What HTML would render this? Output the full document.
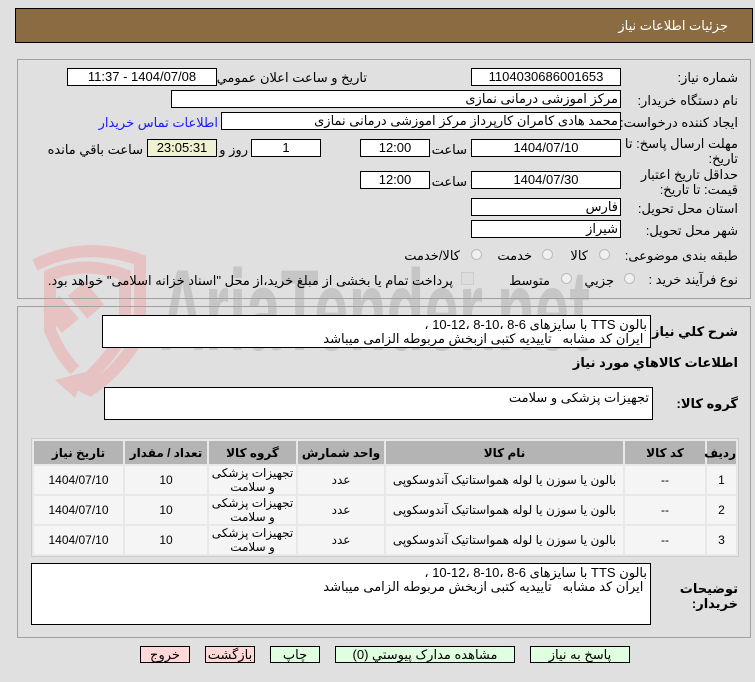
<!DOCTYPE html>
<html><head><meta charset="utf-8"><style>
body{margin:0;width:755px;height:682px;background:#e0e0e0;font-family:"Liberation Sans","DejaVu Sans",sans-serif;font-size:12px;color:#000;position:relative;overflow:hidden}
.a{position:absolute}
.hdr{left:15px;top:8px;width:736px;height:33px;background:#8b6c42;border:1px solid #000}
.hdr span{position:absolute;right:24px;top:9px;color:#fff;font-size:13px}
.pnl{border:1px solid #a0a0a0;left:17px;width:732px}
.box{position:absolute;background:#fff;border:1px solid #000;box-sizing:border-box;text-align:center;font-size:13px;line-height:15px;direction:rtl}
.l{position:absolute;direction:rtl;white-space:nowrap;font-size:13px}
.r{right:17px}
.rad{position:absolute;width:11px;height:11px;border-radius:50%;border:1px solid #bbb;background:#f0f0f0;box-sizing:border-box}
.ta{position:absolute;background:#fff;border:1px solid #000;box-sizing:border-box;direction:rtl;font-size:13px;line-height:15px;padding:2px 3px}
table{position:absolute;left:31px;top:438px;width:708px;table-layout:fixed;border-collapse:separate;border-spacing:2px;background:#e8e8e8;border:1px solid #ccc;direction:rtl}
th{background:#b4b4b4;height:23px;font-size:12px;font-weight:bold;padding:0}
td{background:#f5f5f5;height:28px;text-align:center;font-size:12px;line-height:14px;padding:0}
.btn{position:absolute;top:646px;height:17px;border:1px solid #000;box-sizing:border-box;text-align:center;font-size:13px;line-height:15px;background:#e0ffe0}
.red{background:#ffd8d8}
</style></head><body>
<svg class="a" style="left:0;top:230px" width="640" height="180">
<path d="M35 35 Q85 10 140 30 L140 105 Q120 140 90 160 L80 155 Q110 130 125 100 L125 45 Q85 30 50 45 L50 100 Q60 125 75 140" fill="none" stroke="#e6c2c2" stroke-width="12"/>
<path d="M55 150 L75 168 L85 142 Z" fill="#e6c2c2"/>
<rect x="50" y="70" width="22" height="30" fill="#e6c2c2" transform="rotate(-40 60 85)"/>
<rect x="75" y="55" width="22" height="30" fill="#e6c2c2" transform="rotate(-40 86 70)"/>
<text x="160" y="120" font-family="Liberation Sans" font-weight="bold" font-size="115" fill="#c6c6c6" textLength="430" lengthAdjust="spacingAndGlyphs">AriaTender.net</text>
</svg>
<div class="a hdr"><span>جزئیات اطلاعات نیاز</span></div>
<div class="a pnl" style="top:59px;height:238px"></div>
<div class="a pnl" style="top:306px;height:330px"></div>

<div class="l r" style="top:70px">شماره نیاز:</div>
<div class="box" style="left:471px;top:68px;width:150px;height:18px">1104030686001653</div>
<div class="l" style="right:388px;top:70px">تاريخ و ساعت اعلان عمومي:</div>
<div class="box" style="left:67px;top:68px;width:150px;height:18px">1404/07/08 - 11:37</div>

<div class="l r" style="top:93px">نام دستگاه خریدار:</div>
<div class="box" style="left:171px;top:90px;width:450px;height:18px;text-align:right;padding-right:2px">مرکز اموزشی درمانی نمازی</div>

<div class="l r" style="top:115px">ایجاد کننده درخواست:</div>
<div class="box" style="left:221px;top:112px;width:400px;height:18px;text-align:right;padding-right:2px">محمد هادی کامران کارپرداز مرکز اموزشی درمانی نمازی</div>
<div class="l" style="right:537px;top:115px;color:#1a1aff">اطلاعات تماس خریدار</div>

<div class="l r" style="top:136px">مهلت ارسال پاسخ: تا</div>
<div class="l r" style="top:151px">تاریخ:</div>
<div class="box" style="left:471px;top:139px;width:150px;height:18px">1404/07/10</div>
<div class="l" style="right:288px;top:142px">ساعت</div>
<div class="box" style="left:360px;top:139px;width:70px;height:18px">12:00</div>
<div class="box" style="left:251px;top:139px;width:70px;height:18px">1</div>
<div class="l" style="right:507px;top:142px">روز و</div>
<div class="box" style="left:147px;top:139px;width:70px;height:18px;background:#f0f0d2">23:05:31</div>
<div class="l" style="right:612px;top:142px">ساعت باقي مانده</div>

<div class="l r" style="top:167px">حداقل تاریخ اعتبار</div>
<div class="l r" style="top:182px">قیمت: تا تاریخ:</div>
<div class="box" style="left:471px;top:171px;width:150px;height:18px">1404/07/30</div>
<div class="l" style="right:288px;top:174px">ساعت</div>
<div class="box" style="left:360px;top:171px;width:70px;height:18px">12:00</div>

<div class="l r" style="top:201px">استان محل تحویل:</div>
<div class="box" style="left:471px;top:198px;width:150px;height:18px;text-align:right;padding-right:2px">فارس</div>
<div class="l r" style="top:223px">شهر محل تحویل:</div>
<div class="box" style="left:471px;top:220px;width:150px;height:18px;text-align:right;padding-right:2px">شیراز</div>

<div class="l r" style="top:248px">طبقه بندی موضوعی:</div>
<div class="rad" style="left:599px;top:249px"></div><div class="l" style="right:167px;top:248px">کالا</div>
<div class="rad" style="left:542px;top:249px"></div><div class="l" style="right:223px;top:248px">خدمت</div>
<div class="rad" style="left:471px;top:249px"></div><div class="l" style="right:295px;top:248px">کالا/خدمت</div>

<div class="l r" style="top:272px">نوع فرآیند خرید :</div>
<div class="rad" style="left:624px;top:273px"></div><div class="l" style="right:141px;top:273px">جزيي</div>
<div class="rad" style="left:561px;top:273px"></div><div class="l" style="right:205px;top:273px">متوسط</div>
<div class="a" style="left:461px;top:272px;width:11px;height:11px;background:#ddd;border:1px solid #ccc"></div>
<div class="l" style="right:302px;top:273px">پرداخت تمام یا بخشی از مبلغ خرید،از محل "اسناد خزانه اسلامی" خواهد بود.</div>

<div class="l r" style="top:324px;font-weight:bold">شرح كلي نياز:</div>
<div class="ta" style="left:102px;top:315px;width:549px;height:33px;line-height:14px">بالون TTS با سایزهای 6-8 ،10-8 ،12-10 ،<br>&nbsp;ایران کد مشابه &nbsp; تاییدیه کتبی ازبخش مربوطه الزامی میباشد</div>
<div class="l r" style="top:355px;font-weight:bold">اطلاعات كالاهاي مورد نياز</div>
<div class="l r" style="top:396px;font-weight:bold">گروه کالا:</div>
<div class="ta" style="left:104px;top:387px;width:549px;height:33px">تجهیزات پزشکی و سلامت</div>

<table>
<colgroup><col style="width:29px"><col style="width:80px"><col style="width:237px"><col style="width:86px"><col style="width:87px"><col style="width:82px"><col></colgroup>
<tr><th>رديف</th><th>کد کالا</th><th>نام کالا</th><th>واحد شمارش</th><th>گروه کالا</th><th>تعداد / مقدار</th><th>تاریخ نیاز</th></tr>
<tr><td>1</td><td>--</td><td>بالون یا سوزن یا لوله هموا‌ستاتیک آندوسکوپی</td><td>عدد</td><td>تجهیزات پزشکی و سلامت</td><td>10</td><td>1404/07/10</td></tr>
<tr><td>2</td><td>--</td><td>بالون یا سوزن یا لوله هموا‌ستاتیک آندوسکوپی</td><td>عدد</td><td>تجهیزات پزشکی و سلامت</td><td>10</td><td>1404/07/10</td></tr>
<tr><td>3</td><td>--</td><td>بالون یا سوزن یا لوله هموا‌ستاتیک آندوسکوپی</td><td>عدد</td><td>تجهیزات پزشکی و سلامت</td><td>10</td><td>1404/07/10</td></tr>
</table>

<div class="l r" style="top:581px;font-weight:bold">توضیحات</div>
<div class="l r" style="top:596px;font-weight:bold">خریدار:</div>
<div class="ta" style="left:31px;top:563px;width:620px;height:62px;line-height:14px">بالون TTS با سایزهای 6-8 ،10-8 ،12-10 ،<br>&nbsp;ایران کد مشابه &nbsp; تاییدیه کتبی ازبخش مربوطه الزامی میباشد</div>

<div class="btn" style="left:530px;width:100px">پاسخ به نیاز</div>
<div class="btn" style="left:335px;width:180px">مشاهده مدارک پیوستي (0)</div>
<div class="btn" style="left:270px;width:50px">چاپ</div>
<div class="btn red" style="left:205px;width:50px">بازگشت</div>
<div class="btn red" style="left:140px;width:50px">خروج</div>
</body></html>
